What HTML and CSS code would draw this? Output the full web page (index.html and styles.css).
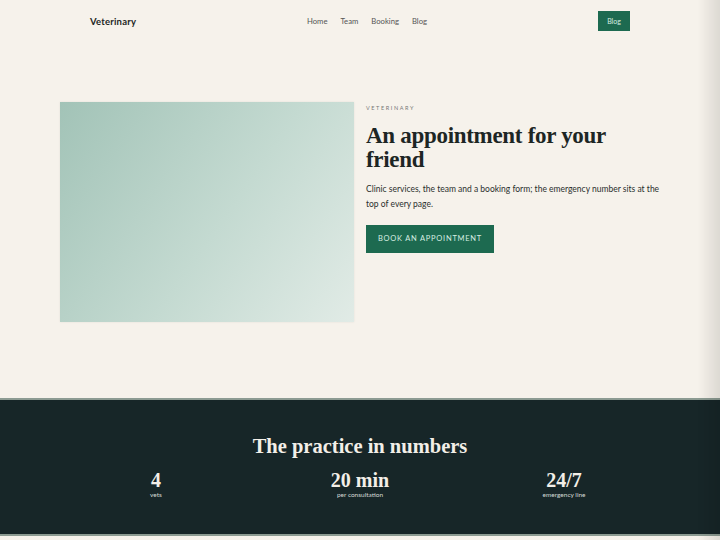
FILE: index.html
```html
<!DOCTYPE html>
<html lang="en">
<head>
  <meta charset="UTF-8" />
  <meta name="viewport" content="width=device-width, initial-scale=1.0" />
  <title>Veterinary</title>
  <link rel="stylesheet" href="styles.css">
</head>
<body>
  <header class="nav">
    <div class="brand">Veterinary</div>
    <nav class="links">
      <a href="#">Home</a>
      <a href="#">Team</a>
      <a href="#">Booking</a>
      <a href="#">Blog</a>
    </nav>
    <div class="nav-right">
      <a class="nav-button" href="#">Blog</a>
    </div>
  </header>

  <section class="hero">
    <div class="hero-image"></div>
    <div class="hero-text">
      <div class="eyebrow">VETERINARY</div>
      <h1>An appointment for your friend</h1>
      <p>Clinic services, the team and a booking form; the emergency number sits at the top of every page.</p>
      <a class="cta" href="#">BOOK AN APPOINTMENT</a>
    </div>
  </section>

  <section class="numbers">
    <h2>The practice in numbers</h2>
    <div class="stats">
      <div class="stat">
        <div class="value">4</div>
        <div class="label">vets</div>
      </div>
      <div class="stat">
        <div class="value">20 min</div>
        <div class="label">per consultation</div>
      </div>
      <div class="stat">
        <div class="value">24/7</div>
        <div class="label">emergency line</div>
      </div>
    </div>
  </section>
</body>
</html>
```

FILE: styles.css
```css
body {
  font-family: 'Lato', sans-serif;
  margin: 0;
  background: #f6f2eb;
  color: #1d2624;
}

body::after {
  content: "";
  position: fixed;
  top: 0;
  right: 0;
  width: 22px;
  height: 100%;
  background: linear-gradient(90deg, rgba(0,0,0,0), rgba(0,0,0,0.1));
  pointer-events: none;
}

a {
  text-decoration: none;
  color: inherit;
}

.nav {
  max-width: 540px;
  margin: 0 auto;
  padding: 11px 0;
  display: flex;
  align-items: center;
}

.brand {
  flex: 1;
  font-size: 9.5px;
  font-weight: bold;
  letter-spacing: 0.2px;
}

.links {
  display: flex;
  gap: 13px;
  margin-left: 14px;
  font-size: 7.7px;
  color: #555;
}

.nav-right {
  flex: 1;
  display: flex;
  justify-content: flex-end;
}

.nav-button {
  width: 32px;
  height: 20px;
  line-height: 20px;
  text-align: center;
  font-size: 7px;
  background: #1d6a50;
  color: #d7eee2;
}

.hero {
  width: 600px;
  margin: 0 auto;
  padding: 60px 0 76px;
  display: grid;
  grid-template-columns: 294px 294px;
  gap: 12px;
}

.hero-image {
  height: 220px;
  background: linear-gradient(125deg, #a2c3b7, #c4dad1 55%, #e1ebe6);
  box-shadow: 0 0 2px rgba(0,0,0,0.08);
}

.eyebrow {
  margin-top: 2px;
  font-size: 5.5px;
  line-height: 8px;
  letter-spacing: 1.6px;
  color: #777;
}

h1 {
  margin: 12px 0 0;
  font-family: 'Liberation Serif', serif;
  font-size: 23px;
  line-height: 24px;
  font-weight: bold;
  letter-spacing: -0.3px;
}

p {
  margin: 10px 0 0;
  font-size: 8.5px;
  line-height: 15px;
  color: #2a2f2d;
}

.cta {
  display: inline-block;
  margin-top: 13px;
  padding: 0 12px;
  height: 28px;
  line-height: 28px;
  font-size: 7.5px;
  letter-spacing: 0.75px;
  background: #1d6a50;
  color: #d7eee2;
}

.numbers {
  background: #172628;
  border-top: 2px solid #8c9b92;
  border-bottom: 2px solid #8c9b92;
  padding: 34px 0 35px;
  color: #f3efe8;
  text-align: center;
}

h2 {
  margin: 0;
  font-family: 'Liberation Serif', serif;
  font-size: 20.5px;
  line-height: 24px;
  font-weight: bold;
}

.stats {
  width: 600px;
  margin: 11px auto 0;
  display: grid;
  grid-template-columns: repeat(3, 1fr);
  gap: 12px;
}

.value {
  font-family: 'Liberation Serif', serif;
  font-size: 20px;
  line-height: 22px;
  font-weight: bold;
}

.label {
  font-size: 6.5px;
  line-height: 8px;
  color: #d5dad6;
}
```
